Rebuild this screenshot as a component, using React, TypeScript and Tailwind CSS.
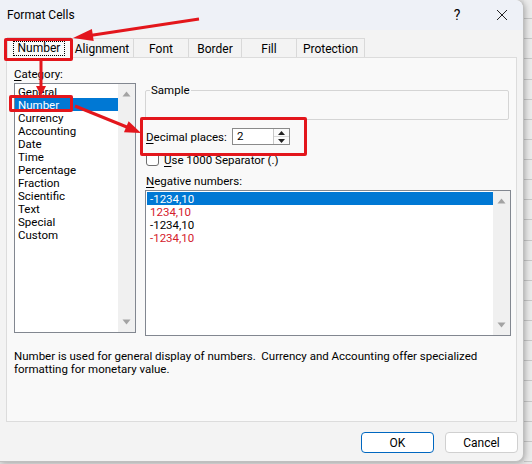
import React from "react";

const cats = ["General", "Number", "Currency", "Accounting", "Date", "Time", "Percentage", "Fraction", "Scientific", "Text", "Special", "Custom"];

const negs = [
  { t: "-1234,10", c: "text-white bg-[#0078d4]" },
  { t: "1234,10", c: "text-[#d4202c]" },
  { t: "-1234,10", c: "text-black" },
  { t: "-1234,10", c: "text-[#d4202c]" },
];

function ScrollBar() {
  return (
    <div className="w-[17px] h-full bg-[#f0f0f0] flex flex-col items-center justify-between py-[7px]">
      <svg width="9" height="6" viewBox="0 0 9 6"><path d="M4.5 0.5 L8.5 5.5 L0.5 5.5 Z" fill="#a3a3a3" /></svg>
      <svg width="9" height="6" viewBox="0 0 9 6"><path d="M0.5 0.5 L8.5 0.5 L4.5 5.5 Z" fill="#a3a3a3" /></svg>
    </div>
  );
}

function Tabs() {
  const tabs = [
    { n: "Alignment", w: "w-[63px]" },
    { n: "Font", w: "w-[55px]" },
    { n: "Border", w: "w-[53px]" },
    { n: "Fill", w: "w-[55px]" },
    { n: "Protection", w: "w-[68px]" },
  ];
  return (
    <div className="mt-[8px] h-[20px] flex items-end pl-[7px]">
      <div className="relative z-10 w-[64px] h-[21px] bg-[#f9f9f9] border-t border-l border-r border-[#d9d9d9] flex items-center justify-center">
        <span className="border border-dotted border-black px-[4px] leading-[13px] text-[12px]">Number</span>
      </div>
      {tabs.map((t) => (
        <div
          key={t.n}
          className={`${t.w} h-[20px] border-t border-r border-[#d9d9d9] flex items-center justify-center leading-[16px] text-[12px]`}
        >
          {t.n}
        </div>
      ))}
    </div>
  );
}

function Dialog() {
  return (
    <div className="relative z-10 flex flex-col w-[524px] h-[462px] bg-[#f3f3f3] rounded-r-[8px] border-r border-b border-[#bfbfbf] shadow-[1px_1px_6px_rgba(0,0,0,0.3)]">
      <div className="h-[30px] flex items-center bg-[#eef1f7] rounded-tr-[8px]">
        <span className="pl-[7px] leading-[16px] text-[12px]">Format Cells</span>
        <span className="ml-auto w-[46px] text-center text-[14px] leading-[16px]">?</span>
        <span className="w-[43px] flex justify-center">
          <svg width="12" height="12" viewBox="0 0 12 12">
            <path d="M1 1 L11 11 M11 1 L1 11" stroke="#222" strokeWidth="1" />
          </svg>
        </span>
      </div>
      <Tabs />
      <div className="-mt-px mx-[6px] h-[365px] border border-[#dcdcdc] bg-[#f9f9f9] flex flex-col">
        <div className="flex">
          <div className="pl-[7px] pt-[8px] flex flex-col">
            <div className="leading-[16px] h-[16px]"><span className="underline underline-offset-2">C</span>ategory:</div>
            <div className="mt-[1px] w-[122px] h-[250px] border border-[#828790] bg-white flex">
              <div className="flex-1 flex flex-col pt-[1px]">
                {cats.map((c) => (
                  <div
                    key={c}
                    className={`h-[13px] leading-[14px] pl-[3px] ${c === "Number" ? "bg-[#0078d4] text-white" : ""}`}
                  >
                    {c}
                  </div>
                ))}
              </div>
              <ScrollBar />
            </div>
          </div>
          <div className="ml-[9px] pt-[32px] w-[366px] flex flex-col">
            <div className="relative w-[364px] h-[30px] border border-[#d5d5d5] rounded-[2px]">
              <span className="absolute -top-[9px] left-[4px] px-[1px] bg-[#f9f9f9] leading-[16px]">Sample</span>
            </div>
            <div className="mt-[8px] h-[17px] flex items-center">
              <span className="w-[87px] pl-[1px] leading-[16px] whitespace-nowrap"><span className="underline underline-offset-2">D</span>ecimal places:</span>
              <div className="w-[58px] h-[17px] border border-[#8a8a8a] bg-white flex items-center">
                <span className="flex-1 pl-[4px] leading-[15px]">2</span>
                <div className="w-[16px] h-[15px] border-l border-[#c8c8c8] bg-[#fbfbfb] flex flex-col">
                  <div className="flex-1 flex items-center justify-center border-b border-[#d8d8d8]">
                    <svg width="7" height="4" viewBox="0 0 7 4"><path d="M3.5 0 L7 4 L0 4 Z" fill="#222" /></svg>
                  </div>
                  <div className="flex-1 flex items-center justify-center">
                    <svg width="7" height="4" viewBox="0 0 7 4"><path d="M0 0 L7 0 L3.5 4 Z" fill="#222" /></svg>
                  </div>
                </div>
              </div>
            </div>
            <div className="mt-[8px] h-[13px] flex items-center pl-[1px]">
              <div className="w-[13px] h-[13px] rounded-[3px] border border-[#6e6e6e] bg-white" />
              <span className="ml-[5px] leading-[16px] whitespace-nowrap"><span className="underline underline-offset-2">U</span>se 1000 Separator (.)</span>
            </div>
            <div className="mt-[7px] h-[16px] leading-[16px] pl-[1px]"><span className="underline underline-offset-2">N</span>egative numbers:</div>
            <div className="mt-[1px] w-[366px] h-[146px] border border-[#828790] bg-white flex">
              <div className="flex-1 flex flex-col pt-[1px] pl-[1px]">
                {negs.map((n, i) => (
                  <div key={i} className={`h-[13px] leading-[14px] pl-[3px] ${n.c}`}>{n.t}</div>
                ))}
              </div>
              <ScrollBar />
            </div>
          </div>
        </div>
        <div className="mt-[14px] pl-[7px] leading-[13px] whitespace-nowrap">
          <div>Number is used for general display of numbers.&nbsp; Currency and Accounting offer specialized</div>
          <div>formatting for monetary value.</div>
        </div>
      </div>
      <div className="mt-[10px] flex justify-end gap-[11px] pr-[5px]">
        <button className="w-[73px] h-[21px] rounded-[4px] border border-[#0067c0] bg-white leading-[16px] text-[12px]">OK</button>
        <button className="w-[73px] h-[21px] rounded-[4px] border border-[#d0d0d0] bg-white leading-[16px] text-[12px]">Cancel</button>
      </div>
    </div>
  );
}

function Annotations() {
  return (
    <div className="absolute inset-0 z-20 pointer-events-none">
      <div className="absolute left-[4px] top-[38px] w-[69px] h-[23px] border-[3px] border-[#e3161c] rounded-[2px]" />
      <div className="absolute left-[9px] top-[95px] w-[64px] h-[17px] border-[3px] border-[#e3161c] rounded-[2px]" />
      <div className="absolute left-[140px] top-[117px] w-[167px] h-[39px] border-[3px] border-[#e3161c] rounded-[2px]" />
      <svg className="absolute left-0 top-0" width="532" height="464" viewBox="0 0 532 464">
        <line x1="199" y1="19" x2="90" y2="35.5" stroke="#e3161c" strokeWidth="3" />
        <polygon points="73,38 93.7,40.9 91.9,29.1" fill="#e3161c" />
        <line x1="41" y1="61" x2="41" y2="88" stroke="#e3161c" strokeWidth="3" />
        <polygon points="41,96 36,86 46,86" fill="#e3161c" />
        <line x1="75" y1="106" x2="128" y2="127.5" stroke="#e3161c" strokeWidth="3" />
        <polygon points="141,133 124,132.3 128.6,121.3" fill="#e3161c" />
      </svg>
    </div>
  );
}

export default function App() {
  return (
    <div className="relative w-[532px] h-[464px] overflow-hidden bg-[#e6e6e6] font-['Roboto',sans-serif] text-[11.5px] text-black">
      <div className="flex h-[462px]">
        <Dialog />
        <div className="flex-1 flex flex-col">
          {Array.from({ length: 23 }).map((_, i) => (
            <div key={i} className={`${i === 0 ? "h-[20px]" : "h-[21px]"} border-b border-[#c8c8c8] bg-[#ebebeb]`} />
          ))}
        </div>
      </div>
      <Annotations />
    </div>
  );
}
